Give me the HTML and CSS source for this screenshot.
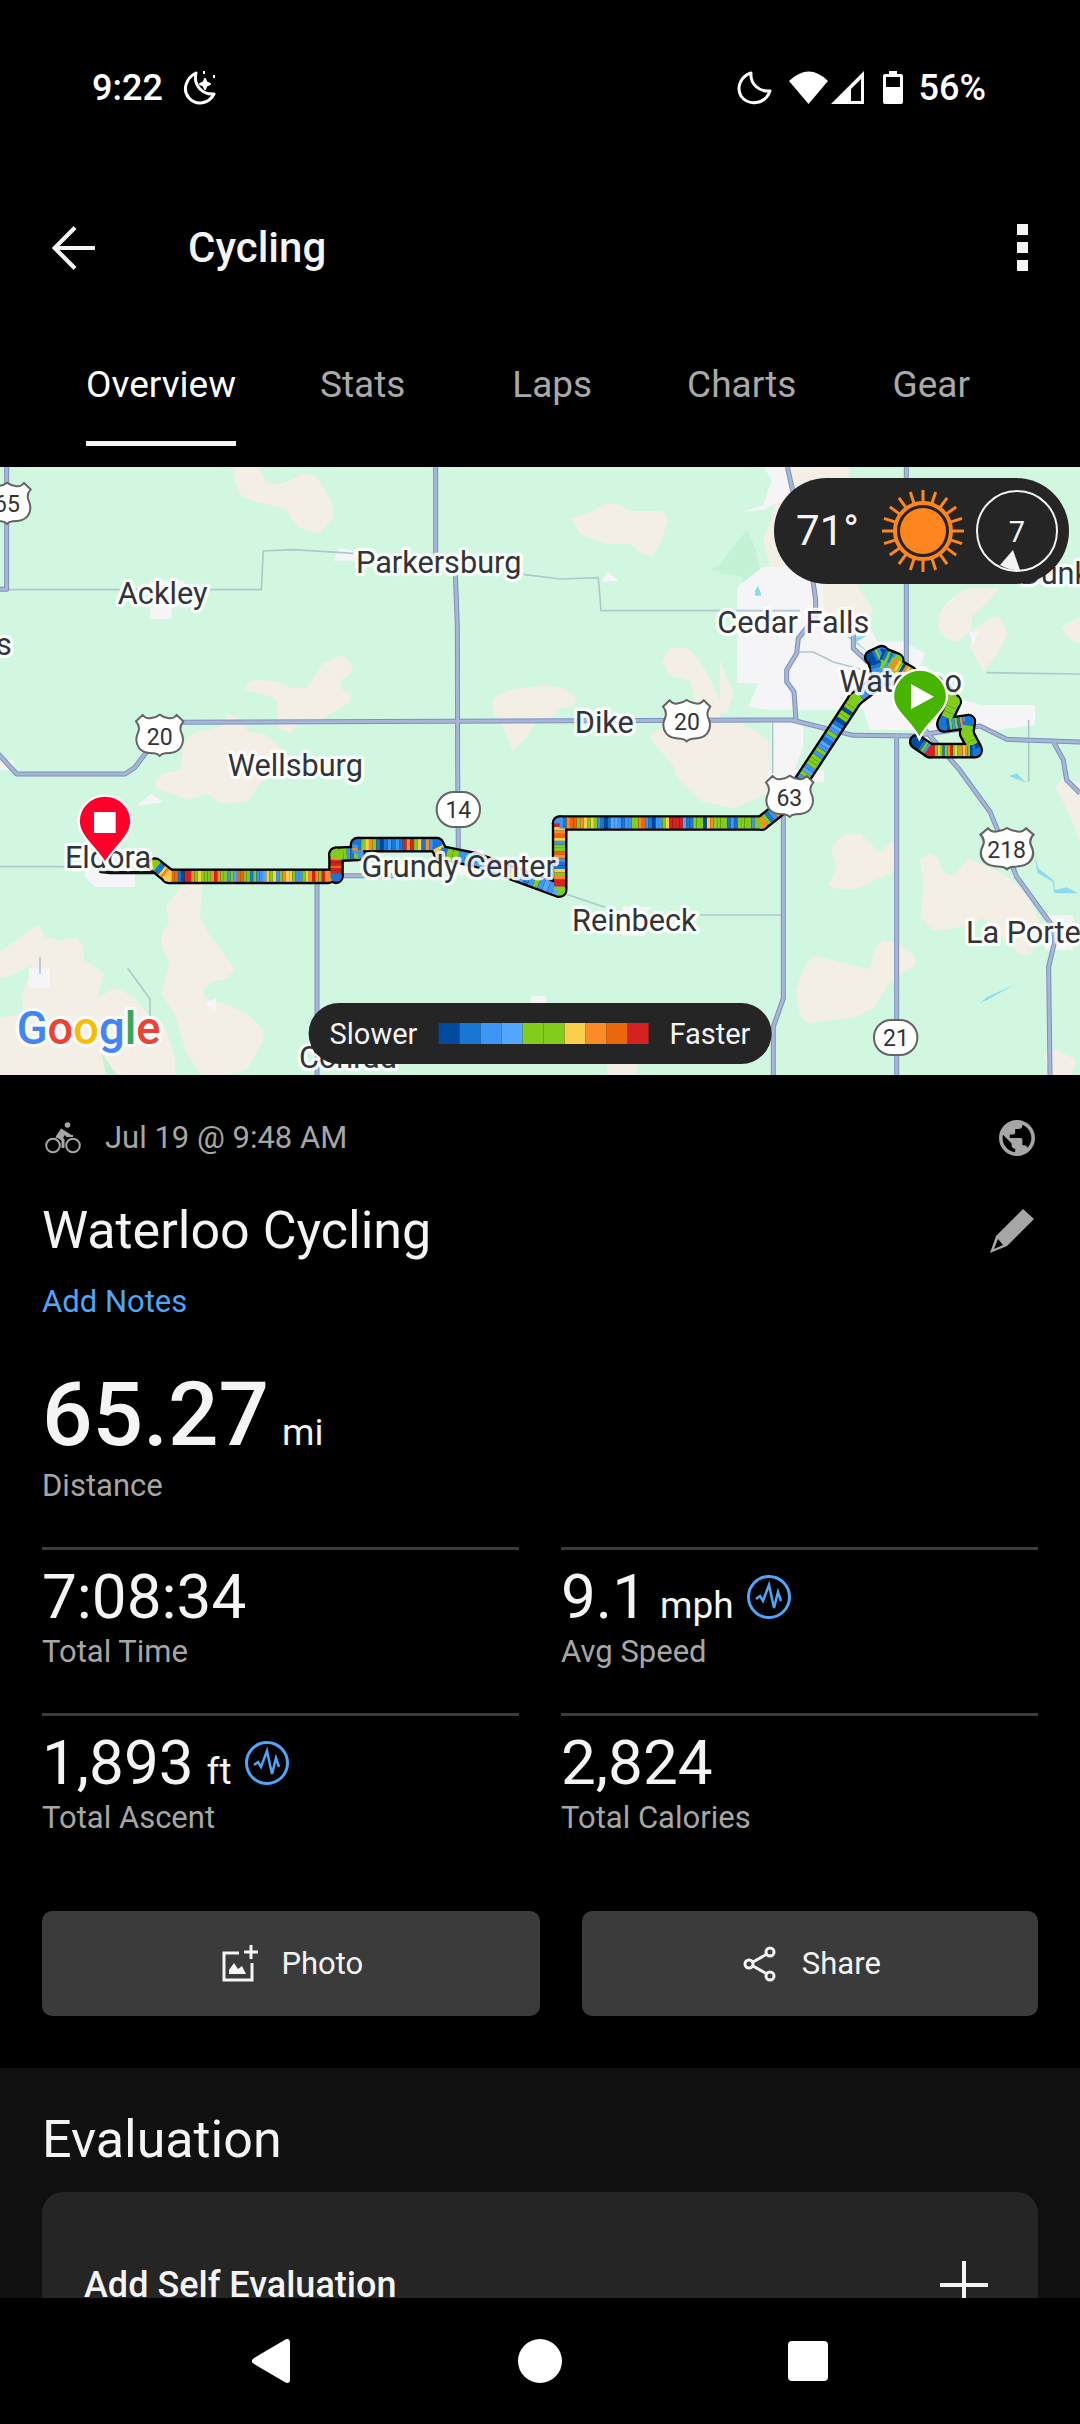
FILE: index.html
```html
<!DOCTYPE html>
<html lang="en">
<head>
    <meta charset="UTF-8">
    <meta name="viewport" content="width=device-width, initial-scale=1.0">
    <title>Waterloo Cycling</title>
    <link rel="stylesheet" href="styles.css">
</head>
<body>
    <div class="status-bar">
        <div class="status-group">
            <span>9:22</span>
            <svg class="moon" viewBox="0 0 36 36" fill="none" stroke="#fff" stroke-width="3" stroke-linejoin="round"><path d="M13 3C3 8-1 20 6 28s20 6 25-4C20 25 10 16 13 3z"/><path d="M22 9l1.500 3.500 3.500 1.500-3.500 1.500L22 19l-1.500-3.500L17 14l3.500-1.500zM21 1v3M31 5v3" stroke-width="2" fill="#fff"/></svg>
        </div>
        <div class="status-group right">
            <svg class="moon" viewBox="0 0 36 36" fill="none" stroke="#fff" stroke-width="3" stroke-linejoin="round"><path d="M14 3C4 6-1 17 4 26c7 10 24 9 29-5C22 22 13 14 14 3z"/></svg>
            <svg class="signals" viewBox="0 0 78 33" fill="#fff"><path d="M0 10Q20-9 39 10L19.500 33z"/><path fill-rule="evenodd" d="M75 0v33H42zM72 8v22H62V18z"/></svg>
            <svg class="battery" viewBox="0 0 20 33"><path fill="#fff" d="M6 0h8v3h4a2 2 0 012 2v26a2 2 0 01-2 2H2a2 2 0 01-2-2V5a2 2 0 012-2h4z"/><path d="M3 6h14v10H3z"/></svg>
            <span>56%</span>
        </div>
    </div>

    <header class="app-bar">
        <button class="icon-btn" aria-label="Back"><svg viewBox="0 0 42 42" fill="none" stroke="#f4f4f4" stroke-width="4"><path d="M41 21H3M22 1.500L2.500 21 22 40.500"/></svg></button>
        <h1>Cycling</h1>
        <button class="icon-btn menu" aria-label="More options"><svg viewBox="0 0 11 48" fill="#f4f4f4"><path d="M0 0h11v11H0zM0 18h11v11H0zM0 36h11v11H0z"/></svg></button>
    </header>

    <nav class="tabs">
        <a href="#overview" class="active">Overview</a>
        <a href="#stats">Stats</a>
        <a href="#laps">Laps</a>
        <a href="#charts">Charts</a>
        <a href="#gear">Gear</a>
    </nav>

    <main>
        <div class="map">
            <svg class="map-canvas" viewBox="0 21 3240 1824" role="img" aria-label="Route map">
                <defs>
                    <symbol id="shield" viewBox="0 0 150 132" preserveAspectRatio="none">
                        <path fill="#fff" stroke="#646464" stroke-width="6" d="M24 5Q34 18 50 14Q65 12 75 4Q86 12 100 14Q116 18 126 5L146 24Q132 40 140 58Q152 84 136 105Q124 120 92 120Q80 121 75 128Q70 121 58 120Q26 120 14 105Q-2 84 10 58Q18 40 4 24z"/>
                    </symbol>
                </defs>
                <rect y="21" width="3240" height="1824" fill="#d1f7e0"/>

                <!-- farmland -->
                <g fill="#f4efe4">
                    <path d="M700 21H780Q784 55 810 72H845L910 42 940 46Q970 70 998 135V178L957 221 897 203 850 145 735 115Q700 90 700 21z"/>
                    <path d="M738 670L760 660 828 664 875 684H917Q935 670 966 612L1026 586 1060 616 1048 645 1022 660V684L1052 706V725L962 779H915L889 800 869 822 832 800V725L808 707 738 690z"/>
                    <path d="M540 930L550 860Q560 820 610 812L670 798 683 763 712 772 745 815 800 825 880 900 780 970 745 1020Q735 1030 660 1029L622 1000 568 1020 467 985V960L490 940z"/>
                    <path d="M1713 175L1775 155 1812 131H1850L1890 153H1988L2005 178 1980 255 1955 288Q1930 290 1890 252H1820L1740 222z"/>
                    <path d="M1476 725Q1495 695 1555 686L1630 677 1692 683 1730 715 1720 738 1682 744 1650 776 1603 792Q1590 830 1537 874L1515 812 1485 770z"/>
                    <path d="M1984 604L2012 563H2058Q2120 610 2160 730V780Q2260 790 2310 850L2305 1000 2200 1045 2160 1035 2105 1024 2100 1020 2030 950 2022 920 1953 840V825L2085 720 2070 662 2010 645z"/>
                    <path d="M2360 21H2548V60L2430 190 2390 320 2310 320 2290 240Q2330 130 2360 21zM2470 360H2560L2620 450 2600 490 2470 500zM2160 780H2220Q2310 870 2305 930H2160z"/>
                    <path d="M2905 385H3000L2960 430 2915 470V510L2870 545Q2830 540 2812 495Q2820 420 2905 385zM2975 470L3000 472 3023 520 3000 570 2950 635 2910 560 2920 510zM3185 500L3240 470V555L3200 530zM2160 600L2200 700 2180 760H2160z"/>
                    <path d="M0 1475L90 1410 118 1395 133 1430 175 1443 228 1432 250 1460 253 1500 312 1540 293 1610 350 1584 400 1610 450 1670 495 1700 525 1790V1845H0V1672L75 1665 63 1613 97 1517 12 1553 0 1548z"/>
                    <path d="M550 1270H608L600 1370 620 1412 705 1528 680 1556 635 1565 610 1590 615 1615 680 1636Q740 1650 790 1710V1740L742 1828 680 1845H605L560 1780 523 1660 483 1600 508 1510 486 1460V1420L507 1390 498 1340z"/>
                    <path d="M2505 1150L2530 1125 2580 1120 2640 1180 2675 1143 2695 1165V1215L2670 1240 2570 1286H2510L2485 1275 2510 1220 2493 1170zM2760 1200L2790 1180 2815 1195 2830 1237 2857 1248 2905 1196Q3040 1240 3090 1320L3125 1400 3095 1480 3070 1488 3045 1470 2950 1375 2890 1402 2800 1412 2762 1370 2770 1270z"/>
                    <path d="M2442 1488L2608 1528 2625 1465 2650 1440 2700 1450 2745 1490V1515L2690 1555 2660 1580 2625 1640 2570 1672 2425 1690 2400 1665 2388 1590 2415 1515zM3130 1785L3165 1768 3228 1800 3215 1845H3150zM1820 1810H1911V1845H1822zM2025 930H2290L2250 1000 2200 1045 2160 1035 2105 1024zM3185 955L3240 970V1150Q3220 1080 3168 985z"/>
                </g>
                <path fill="#c4f2d5" d="M2160 310L2240 210Q2280 270 2288 410L2230 380 2225 350 2160 340zM2130 328L2160 315V335zM305 1780L350 1845H318z"/>

                <!-- towns -->
                <g fill="#f5f5f7">
                    <path d="M450 362H555L515 415V477H450zM1018 264L1080 275V302H1000zM1823 335L1858 362 1803 366zM452 1001L492 1026 411 1038zM255 1230H405V1281H285L255 1250zM87 1524H150V1585H87zM615 1630L648 1614V1659zM1375 1170H1450V1245H1375zM1593 1608H1638V1640H1593zM1866 1340H1956L1935 1360V1427H1866zM0 905L40 898V930H0zM3135 1366H3219V1470H3135z"/>
                    <path d="M2290 21H2365V110L2290 150 2230 155 2290 135 2315 60zM2290 320H2470V450L2620 520 2630 545H2710L2775 580 2755 630 2865 710 2940 735H3105V795L2990 810H2610L2590 750H2310L2245 740 2275 670H2212V380zM2312 780H2410V860L2370 965H2312zM2908 515H2935L2918 560zM2305 930H2472V965H2305z"/>
                </g>

                <!-- water -->
                <path fill="#8adbf0" d="M2274 378L2283 400V407H2265V392zM2540 530L2600 528 2570 545 2610 580 2560 545zM3027 948L3050 940 3078 968zM3104 1185L3115 1225 3162 1262 3165 1290 3200 1282 3235 1300H3163L3158 1265 3112 1238zM2940 1630L2960 1612 3048 1572 2970 1615z"/>

                <!-- minor roads -->
                <g fill="none" stroke="#afc8cd" stroke-width="5">
                    <path d="M26 389H784L790 273 880 269 1060 280M1570 343L1680 357 1795 353 1803 452H2400M1700 1303L1815 1342M2100 1365H2345M0 1220H300M120 1490V1543M383 1525L450 1617V1690"/>
                    <path d="M2960 638L3240 642M3086 780V965M2318 780V940M2390 576H2440L2500 606 2590 630"/>
                </g>

                <!-- highways -->
                <g id="highways" fill="none" stroke="#7d90bf" stroke-width="15" stroke-linejoin="round">
                    <path id="roads" d="M20 21V388H0M-20 865L50 942H375L405 922 440 875M540 787L1720 782 2375 780 2560 826 2740 828 2940 798 3020 838 3240 846M1307 21V330M1366 340L1372 500 1373 930 1375 1170M2362 21L2380 100 2440 370 2447 420V470L2395 535 2390 580 2360 630V665L2382 695 2388 780M2560 480V565L2640 640 2800 840 2875 925 2970 1055 3050 1250 3155 1395 3165 1440 3146 1520 3150 1845M2719 21V620M2690 820V1845M2350 1050V1615L2320 1700V1845M3160 845L3190 900 3200 960 3240 1000M951 1260V1845M1030 1247H1180"/>
                    <use href="#roads" stroke="#a7b6d6" stroke-width="9"/>
                </g>

                <!-- coloured strips are added by route.js -->
                <g id="route" fill="none" stroke-linejoin="round" stroke-linecap="round"></g>

                <g class="towns">
                    <text x="488" y="432">Ackley</text>
                    <text x="1316" y="340">Parkersburg</text>
                    <text x="2380" y="519">Cedar Falls</text>
                    <text x="2702" y="697">Waterloo</text>
                    <text x="1813" y="820">Dike</text>
                    <text x="886" y="949">Wellsburg</text>
                    <text x="324" y="1223">Eldora</text>
                    <text x="1376" y="1250">Grundy Center</text>
                    <text x="1903" y="1413">Reinbeck</text>
                    <text x="3070" y="1448">La Porte</text>
                    <text x="1044" y="1825">Conrad</text>
                    <text x="3166" y="373">Dunk</text>
                    <text x="12" y="584">s</text>
                </g>

                <g class="shields">
                    <use href="#shield" x="-54" y="64" width="150" height="132"/><text x="21" y="157">65</text>
                    <use href="#shield" x="404" y="760" width="150" height="132"/><text x="479" y="854">20</text>
                    <use href="#shield" x="1985" y="716" width="150" height="132"/><text x="2061" y="810">20</text>
                    <use href="#shield" x="2294" y="943" width="150" height="132"/><text x="2368" y="1037">63</text>
                    <use href="#shield" x="2937" y="1100" width="168" height="132"/><text x="3020" y="1193">218</text>
                    <rect x="1310" y="996" width="130" height="105" rx="52"/><text x="1375" y="1073">14</text>
                    <rect x="2622" y="1680" width="130" height="105" rx="52"/><text x="2688" y="1757">21</text>
                </g>

                <g stroke="#fff" stroke-width="7">
                    <path fill="#ff002b" d="M315 1210C290 1165 236 1130 236 1084A79 77 0 01394 1084C394 1130 340 1165 315 1210z"/>
                    <path fill="#47b400" d="M2758 836C2735 785 2679 755 2679 710A80 80 0 012841 710C2841 755 2781 785 2758 836z"/>
                </g>
                <path fill="#fff" d="M282 1056H347V1119H282zM2733 672L2802 710 2733 748z"/>

                <text class="google" x="50" y="1752"><tspan fill="#4285f4">G</tspan><tspan fill="#ea4335">o</tspan><tspan fill="#fbbc04">o</tspan><tspan fill="#4285f4">g</tspan><tspan fill="#34a853">l</tspan><tspan fill="#ea4335">e</tspan></text>
            </svg>

            <div class="weather">
                <span>71°</span>
                <svg class="sun" viewBox="-42 -42 84 84" fill="none" stroke="#ff861f">
                    <circle r="23" fill="#ff861f" stroke="none"/>
                    <circle r="28" stroke-width="4"/>
                    <g stroke-width="3"><path id="rays" d="M0-41V-28M0 41V28M12.700-39L8.700-27M-12.700 39L-8.700 27"/><use href="#rays" transform="rotate(36)"/><use href="#rays" transform="rotate(72)"/><use href="#rays" transform="rotate(108)"/><use href="#rays" transform="rotate(144)"/></g>
                </svg>
                <div class="wind">7<svg viewBox="0 0 82 82"><path fill="#f4f4f4" d="M37 60L44 80Q34 81 24 75z"/></svg></div>
            </div>

            <div class="legend">
                <span>Slower</span>
                <div class="scale"><i class="n"></i><i class="b"></i><i class="c"></i><i class="l"></i><i class="g"></i><i class="g"></i><i class="y"></i><i class="o"></i><i class="d"></i><i class="r"></i></div>
                <span>Faster</span>
            </div>
        </div>

        <section class="summary">
            <div class="date-row">
                <svg class="bike" viewBox="0 0 36 32" fill="none" stroke="#a6a6a6"><g stroke-width="2"><circle cx="8" cy="23.500" r="6.800"/><circle cx="28" cy="23.500" r="6.800"/></g><circle cx="22.500" cy="3" r="2.800" fill="#a6a6a6" stroke="none"/><path d="M17 8L13 14l5 4v8" stroke-width="3"/><path d="M17 7l-5 8 5 1 3-5 2 3h6" stroke-width="2" fill="#a6a6a6"/></svg>
                <span>Jul 19 @ 9:48 AM</span>
                <svg class="globe" viewBox="2 2 20 20" fill="#a6a6a6"><path d="M12 2C6.480 2 2 6.480 2 12s4.480 10 10 10 10-4.480 10-10S17.520 2 12 2zm-1 17.930c-3.950-.490-7-3.850-7-7.930 0-.620.080-1.210.210-1.790L9 15v1c0 1.100.900 2 2 2v1.930zm6.900-2.540c-.260-.810-1-1.390-1.900-1.390h-1v-3c0-.550-.450-1-1-1H8v-2h2c.550 0 1-.450 1-1V7h2c1.100 0 2-.900 2-2v-.410c2.930 1.190 5 4.060 5 7.410 0 2.080-.800 3.970-2.100 5.390z"/></svg>
            </div>
            <div class="title-row">
                <h2>Waterloo Cycling</h2>
                <button class="icon-btn" aria-label="Edit name"><svg viewBox="0 0 44 44" fill="#a6a6a6"><path fill-rule="evenodd" d="M33 0L44 10 17 37 0 44 6 27zM8 30L4 40 13 36z"/></svg></button>
            </div>
            <a href="#notes" class="notes">Add Notes</a>

            <div class="value distance"><strong>65.27</strong><span class="unit">mi</span></div>
            <div class="label">Distance</div>

            <div class="stats">
                <div class="stat">
                    <div class="value">7:08:34</div>
                    <div class="label">Total Time</div>
                </div>
                <div class="stat">
                    <div class="value">9.1<span class="unit">mph</span><svg class="badge" viewBox="0 0 44 44" fill="none" stroke="#4fa5f9"><circle cx="22" cy="22" r="20.500" stroke-width="3"/><path d="M9 24l4-3 3 5 6-16 5 23 4-16 3 9" stroke-width="2.500"/></svg></div>
                    <div class="label">Avg Speed</div>
                </div>
                <div class="stat">
                    <div class="value">1,893<span class="unit">ft</span><svg class="badge" viewBox="0 0 44 44" fill="none" stroke="#4fa5f9"><circle cx="22" cy="22" r="20.500" stroke-width="3"/><path d="M9 24l4-3 3 5 6-16 5 23 4-16 3 9" stroke-width="2.500"/></svg></div>
                    <div class="label">Total Ascent</div>
                </div>
                <div class="stat">
                    <div class="value">2,824</div>
                    <div class="label">Total Calories</div>
                </div>
            </div>

            <div class="actions">
                <button class="photo"><svg viewBox="0 0 42 42" fill="none" stroke="#f4f4f4" stroke-width="3"><path d="M21 10H6v27h28V20M33 2v14M26 9h14"/><path d="M11 31V27l5-7 4 6 4-3 4 8z" fill="#f4f4f4" stroke="none"/></svg>Photo</button>
                <button class="share"><svg viewBox="0 0 42 42" fill="none" stroke="#f4f4f4" stroke-width="3"><circle cx="10" cy="21" r="4"/><circle cx="31" cy="9" r="4"/><circle cx="31" cy="33" r="4"/><path d="M14 19l14-8M14 23l14 8"/></svg>Share</button>
            </div>
        </section>

        <section class="evaluation">
            <h2>Evaluation</h2>
            <button class="card">
                <span>Add Self Evaluation</span>
                <svg viewBox="0 0 48 48" stroke="#f4f4f4" stroke-width="4"><path d="M24 0v48M0 24h48"/></svg>
            </button>
        </section>
    </main>

    <footer class="system-nav">
        <button aria-label="Back"><svg viewBox="0 0 44 44" fill="#fff" stroke="#fff" stroke-width="6" stroke-linejoin="round"><path d="M37 3v38L5 22z"/></svg></button>
        <button aria-label="Home"><svg viewBox="0 0 44 44" fill="#fff"><circle cx="22" cy="22" r="22"/></svg></button>
        <button aria-label="Recent apps"><svg viewBox="0 0 44 44" fill="#fff"><rect x="2" y="2" width="40" height="40" rx="4"/></svg></button>
    </footer>

    <script src="route.js"></script>
</body>
</html>
```

FILE: route.js
```js
const colors = {
    n: '#004a9f', b: '#1976d2', c: '#3d96f5', l: '#54a7ff', g: '#82cc1e',
    y: '#fbce4b', o: '#fa8b25', d: '#ea670c', r: '#d62121'
};

// each leg: start, end, one letter per speed strip
const legs = [
    [465, 1215, 505, 1247, 'gbbyoy'],
    [505, 1249, 985, 1249, 'yddbnrrogygggoroggcglddggbgcclygycgoyygccgyorogro'],
    [1008, 1249, 1008, 1183, 'brrdrrog'],
    [1008, 1183, 1073, 1180, 'gggcbg'],
    [1073, 1180, 1073, 1154, 'coc'],
    [1073, 1154, 1310, 1154, 'bgyogbnbcbcbrorgybocb'],
    [1310, 1154, 1322, 1178, 'byo'],
    [1322, 1178, 1430, 1200, 'bggclb'],
    [1430, 1200, 1675, 1290, 'lcrclllgclbcgclcl'],
    [1679, 1290, 1679, 1090, 'grrogybbcodggcydoyr'],
    [1679, 1089, 2285, 1089, 'cboddgoygygcbnbllcbccggodcbnccgyrrrrlbbgggnyoggggbcbggggcgg'],
    [2285, 1089, 2360, 1030, 'ogbcoggg'],
    [2360, 1030, 2565, 718, 'ggggggncglcgggcgclbcgclbnggnggg'],
    [2565, 718, 2640, 660, 'gccll'],
    [2632, 635, 2622, 590, 'cbnn'],
    [2660, 650, 2730, 665, 'cbcg'],
    [2615, 592, 2645, 578, 'nbgc'],
    [2645, 610, 2720, 645, 'gcbgycb'],
    [2645, 582, 2690, 600, 'nbgbcg'],
    [2670, 605, 2730, 640, 'gooygnoyg'],
    [2825, 680, 2862, 725, 'gggg'],
    [2862, 725, 2832, 790, 'gggb'],
    [2832, 795, 2905, 785, 'bngcgbocb'],
    [2905, 785, 2900, 820, 'bgg'],
    [2900, 820, 2925, 868, 'gggn'],
    [2925, 872, 2790, 872, 'bngoyogygrogbgygrr'],
    [2790, 872, 2750, 845, 'rcgbnn']
];

const route = document.getElementById('route');

function draw(d, color, width, cap) {
    const path = document.createElementNS('http://www.w3.org/2000/svg', 'path');
    path.setAttribute('d', d);
    path.setAttribute('stroke', color);
    path.setAttribute('stroke-width', width);
    if (cap) path.setAttribute('stroke-linecap', cap);
    route.appendChild(path);
}

// black outline under everything
draw('M302 1235L330 1238H460', '#111', 10);
legs.forEach(([x1, y1, x2, y2]) => draw(`M${x1} ${y1}L${x2} ${y2}`, '#000', 47));
// round joints, then the strips
legs.forEach(([x1, y1, x2, y2, strips]) => {
    draw(`M${x1} ${y1}h1`, colors[strips[0]], 33);
    draw(`M${x2} ${y2}h1`, colors[strips[strips.length - 1]], 33);
});
legs.forEach(([x1, y1, x2, y2, strips]) => {
    const dx = (x2 - x1) / strips.length;
    const dy = (y2 - y1) / strips.length;
    [...strips].forEach((s, i) => {
        draw(`M${x1 + dx * i} ${y1 + dy * i}l${dx} ${dy}`, colors[s], 33, 'butt');
    });
});
```

FILE: styles.css
```css
* {
    box-sizing: border-box;
}

body {
    margin: 0;
    height: 100vh;
    display: flex;
    flex-direction: column;
    overflow: hidden;
    background: #000;
    color: #f4f4f4;
    font-family: Roboto, sans-serif;
    font-size: 31px;
    line-height: 38px;
}

h1, h2 {
    margin: 0;
    font-weight: 400;
}

button {
    border: none;
    padding: 0;
    background: none;
    color: inherit;
    font: inherit;
    cursor: pointer;
}

a {
    text-decoration: none;
}

svg {
    display: block;
    flex: none;
}

/* top bars */
.status-bar {
    display: flex;
    justify-content: space-between;
    align-items: center;
    height: 175px;
    flex: none;
    padding: 0 94px 0 92px;
    color: #fff;
    font-size: 36px;
    font-weight: 500;
}

.status-group {
    display: flex;
    align-items: center;
    gap: 20px;
}

.status-group.right {
    gap: 16px;
}

.moon {
    width: 36px;
    height: 36px;
}

.signals {
    width: 78px;
    height: 33px;
}

.battery {
    width: 20px;
    height: 33px;
}

.app-bar {
    display: flex;
    align-items: center;
    height: 145px;
    flex: none;
    padding: 0 52px;
}

.app-bar h1 {
    flex: 1;
    margin-left: 92px;
    font-size: 42px;
    font-weight: 500;
}

.icon-btn svg {
    width: 44px;
    height: 44px;
}

.icon-btn.menu svg {
    width: 11px;
    height: 48px;
}

.tabs {
    display: flex;
    flex: none;
    padding: 0 54px 21px;
}

.tabs a {
    flex: 1;
    display: flex;
    flex-direction: column;
    align-items: center;
    margin: 0 32px;
    padding-top: 8px;
    color: #a9a9a9;
    font-size: 37px;
    line-height: 113px;
    border-bottom: 5px solid transparent;
}

.tabs a.active {
    color: #fff;
    border-color: #f4f4f4;
}

main {
    flex: 1;
    min-height: 0;
    overflow: hidden;
}

/* map */
.map {
    position: relative;
}

.map-canvas {
    width: 100%;
    height: auto;
}

.towns {
    font-size: 92px;
    text-anchor: middle;
    fill: #333438;
    stroke: rgba(255, 255, 255, 0.85);
    stroke-width: 20px;
    stroke-linejoin: round;
    paint-order: stroke;
}

.shields {
    font-size: 69px;
    text-anchor: middle;
    fill: #333;
}

.shields rect {
    fill: #fff;
    stroke: #646464;
    stroke-width: 6px;
}

.google {
    font-size: 136px;
    font-weight: 500;
    stroke: #fafafa;
    stroke-width: 20px;
    stroke-linejoin: round;
    paint-order: stroke;
}

.weather {
    position: absolute;
    top: 11px;
    right: 11px;
    display: flex;
    align-items: center;
    gap: 11px;
    height: 106px;
    padding: 0 11px 0 22px;
    border-radius: 53px;
    background: #252525;
    font-size: 42px;
}

.weather span {
    margin-right: 11px;
}

.sun {
    width: 84px;
    height: 84px;
}

.wind {
    position: relative;
    width: 82px;
    height: 82px;
    border: 2px solid #f4f4f4;
    border-radius: 50%;
    font-size: 29px;
    line-height: 80px;
    text-align: center;
}

.wind svg {
    position: absolute;
    inset: -2px;
}

.legend {
    position: absolute;
    bottom: 11px;
    left: 50%;
    transform: translateX(-50%);
    display: flex;
    align-items: center;
    gap: 21px;
    height: 61px;
    padding: 0 21px;
    border-radius: 31px;
    background: #252525;
    font-size: 29px;
}

.scale {
    display: flex;
}

.scale i {
    width: 21px;
    height: 21px;
}

.n { background: #004a9f; }
.b { background: #1976d2; }
.c { background: #3d96f5; }
.l { background: #54a7ff; }
.g { background: #82cc1e; }
.y { background: #fbce4b; }
.o { background: #fa8b25; }
.d { background: #ea670c; }
.r { background: #d62121; }

/* activity summary */
.summary {
    padding: 42px 42px 52px;
}

.date-row {
    display: flex;
    align-items: center;
    height: 42px;
    color: #a6a6a6;
}

.date-row span {
    flex: 1;
    margin-left: 24px;
}

.bike {
    width: 36px;
    height: 32px;
    margin-left: 3px;
}

.globe {
    width: 36px;
    height: 36px;
    margin-right: 3px;
}

.title-row {
    display: flex;
    justify-content: space-between;
    align-items: center;
    margin: 41px 4px 21px 0;
}

.title-row h2,
.evaluation h2 {
    font-size: 52px;
    line-height: 62px;
}

.notes {
    display: block;
    color: #4fa5f9;
}

.label {
    color: #a6a6a6;
}

.stats {
    display: grid;
    grid-template-columns: 1fr 1fr;
    column-gap: 42px;
    margin-top: 42px;
}

.stat {
    padding: 10px 0 42px;
    border-top: 3px solid #3c3c3c;
}

.value {
    display: flex;
    align-items: baseline;
    gap: 13px;
    height: 73px;
    font-size: 62px;
    line-height: 73px;
}

.value.distance {
    height: 105px;
    margin-top: 41px;
    line-height: 105px;
}

.distance strong {
    font-size: 89px;
    font-weight: 500;
}

.unit {
    font-size: 37px;
    line-height: 38px;
}

.badge {
    width: 44px;
    height: 44px;
    align-self: center;
}

.actions {
    display: flex;
    gap: 42px;
    margin-top: 32px;
}

.actions button {
    display: flex;
    justify-content: center;
    align-items: center;
    gap: 21px;
    height: 105px;
    border-radius: 10px;
    background: #3b3b3b;
}

.actions svg {
    width: 42px;
    height: 42px;
}

.photo {
    flex: 12;
}

.share {
    flex: 11;
}

/* evaluation */
.evaluation {
    padding: 41px 42px;
    background: #101010;
}

.card {
    display: flex;
    justify-content: space-between;
    align-items: center;
    width: 100%;
    height: 186px;
    margin-top: 21px;
    padding: 0 50px 0 42px;
    border-radius: 21px;
    background: #252525;
    font-size: 36px;
    font-weight: 500;
}

.card svg {
    width: 48px;
    height: 48px;
}

/* system buttons */
.system-nav {
    display: flex;
    justify-content: center;
    align-items: center;
    gap: 224px;
    height: 126px;
    flex: none;
    background: #000;
}

.system-nav svg {
    width: 44px;
    height: 44px;
}
```
